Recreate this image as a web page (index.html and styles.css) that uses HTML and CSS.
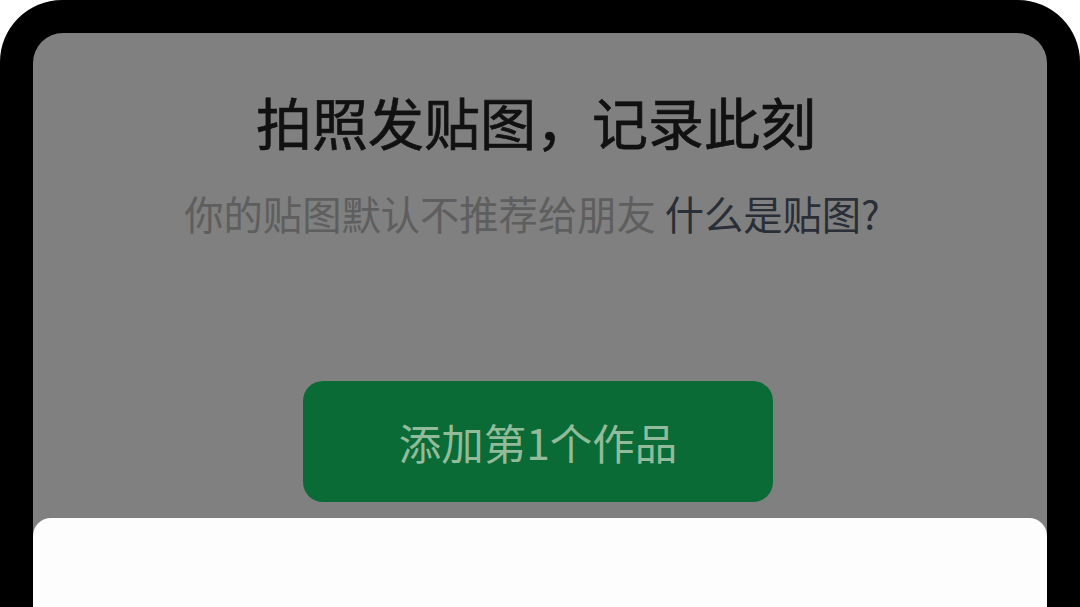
FILE: index.html
```html
<!DOCTYPE html>
<html lang="zh-CN">
<head>
<meta charset="utf-8">
<title>贴图</title>
<link rel="stylesheet" href="styles.css">
</head>
<body>
<div class="frame">
  <div class="panel">
    <h1 class="title">拍照发贴图，记录此刻</h1>
    <p class="subtitle">你的贴图默认不推荐给朋友 <span class="link">什么是贴图?</span></p>
    <button class="add-btn">添加第1个作品</button>
    <div class="sheet"></div>
  </div>
</div>
</body>
</html>
```

FILE: styles.css
```css
html, body {
  margin: 0;
  padding: 0;
  background: #ffffff;
  width: 1080px;
  height: 607px;
  overflow: hidden;
}

.frame {
  box-sizing: border-box;
  width: 1080px;
  height: 607px;
  background: #000000;
  border-radius: 62px 62px 0 0;
  padding: 33px 33px 0 33px;
  display: flex;
}

.panel {
  flex: 1;
  background: #808080;
  border-radius: 30px 30px 0 0;
  display: flex;
  flex-direction: column;
  align-items: center;
  font-family: "Noto Sans CJK SC", "Noto Sans", sans-serif;
}

.title {
  margin: 54px 0 0 0;
  font-size: 56px;
  line-height: 68px;
  font-weight: 400;
  color: #111111;
  -webkit-text-stroke: 0.7px #111111;
  transform: translateX(-4px);
}

.subtitle {
  margin: 35px 0 0 0;
  font-size: 39.3px;
  line-height: 46px;
  font-weight: 400;
  color: #5e5e5e;
  transform: translateX(-8px);
}

.link {
  color: #2a2e37;
}

.add-btn {
  margin-top: 145px;
  width: 470px;
  height: 121px;
  border: none;
  border-radius: 20px;
  background: #0b6b36;
  color: #92bb9b;
  font-family: "Noto Sans CJK SC", "Noto Sans", sans-serif;
  font-size: 42.5px;
  font-weight: 400;
  padding: 0;
  transform: translateX(-2px);
}

.sheet {
  margin-top: auto;
  align-self: stretch;
  height: 89px;
  background: #fdfdfd;
  border-radius: 18px 18px 0 0;
}
```
